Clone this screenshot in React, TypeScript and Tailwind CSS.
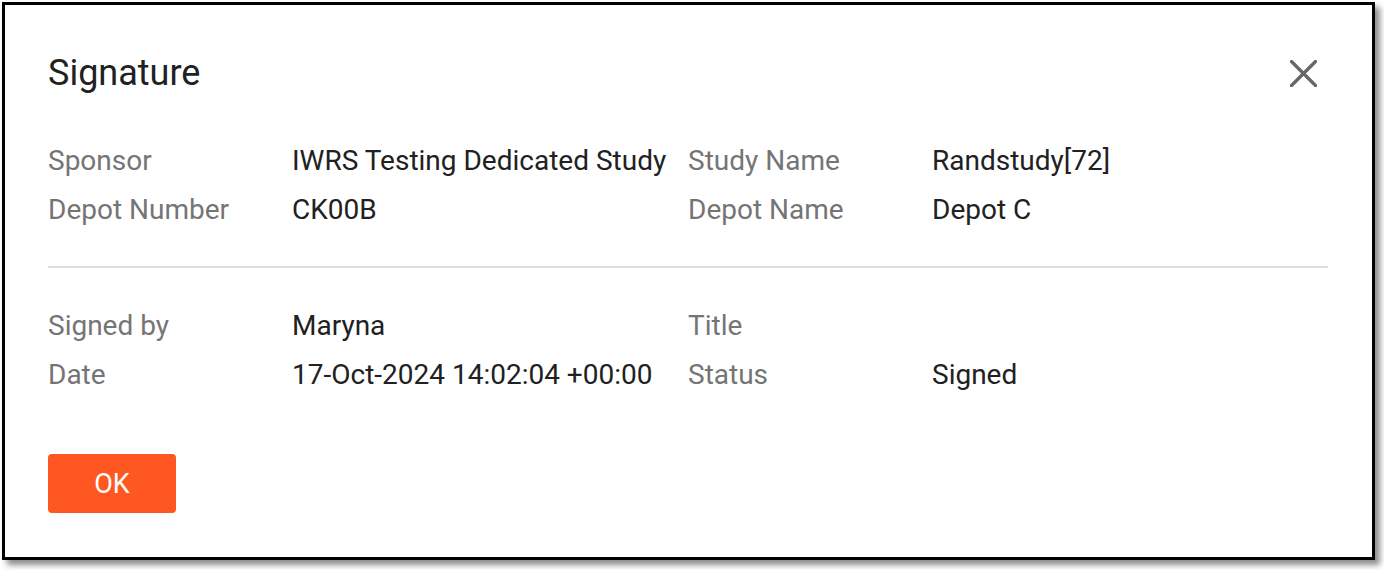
import React from "react";

type Field = { label: string; value: string };

function FieldGrid({ fields }: { fields: Field[] }) {
  return (
    <div className="grid grid-cols-[244px_396px_244px_396px] text-[28px] leading-[49px]">
      {fields.map((f) => (
        <React.Fragment key={f.label}>
          <div className="text-[#757575] whitespace-nowrap">{f.label}</div>
          <div className="text-[#212121] whitespace-nowrap">{f.value}</div>
        </React.Fragment>
      ))}
    </div>
  );
}

export default function App() {
  const studyFields: Field[] = [
    { label: "Sponsor", value: "IWRS Testing Dedicated Study" },
    { label: "Study Name", value: "Randstudy[72]" },
    { label: "Depot Number", value: "CK00B" },
    { label: "Depot Name", value: "Depot C" },
  ];
  const signFields: Field[] = [
    { label: "Signed by", value: "Maryna" },
    { label: "Title", value: "" },
    { label: "Date", value: "17-Oct-2024 14:02:04 +00:00" },
    { label: "Status", value: "Signed" },
  ];

  return (
    <div className="w-[1384px] h-[570px] bg-white pt-[2px] pl-[2px] font-['Roboto','Liberation_Sans',sans-serif]">
      <div className="w-[1373px] h-[558px] bg-white border-[3px] border-black shadow-[5px_5px_6px_rgba(0,0,0,0.45)] pl-[43px] pr-[44px] pt-[44px]">
        {/* Header */}
        <div className="flex items-start justify-between h-[48px]">
          <h2 className="text-[36px] leading-[48px] text-[#212121] font-normal">Signature</h2>
          <button className="w-[49px] h-[49px] flex items-center justify-center">
            <svg width="27" height="27" viewBox="0 0 27 27">
              <path d="M1.5 1.5 L25.5 25.5 M25.5 1.5 L1.5 25.5" stroke="#666666" strokeWidth="3.2" strokeLinecap="round" />
            </svg>
          </button>
        </div>

        <div className="mt-[39px]">
          <FieldGrid fields={studyFields} />
        </div>

        <div className="mt-[32px] h-[2px] bg-[#e0e0e0]" />

        <div className="mt-[33px]">
          <FieldGrid fields={signFields} />
        </div>

        <button className="mt-[55px] w-[128px] h-[59px] rounded-[4px] bg-[#ff5722] text-white text-[27px] leading-[59px] pt-[2px] flex items-center justify-center">
          OK
        </button>
      </div>
    </div>
  );
}
